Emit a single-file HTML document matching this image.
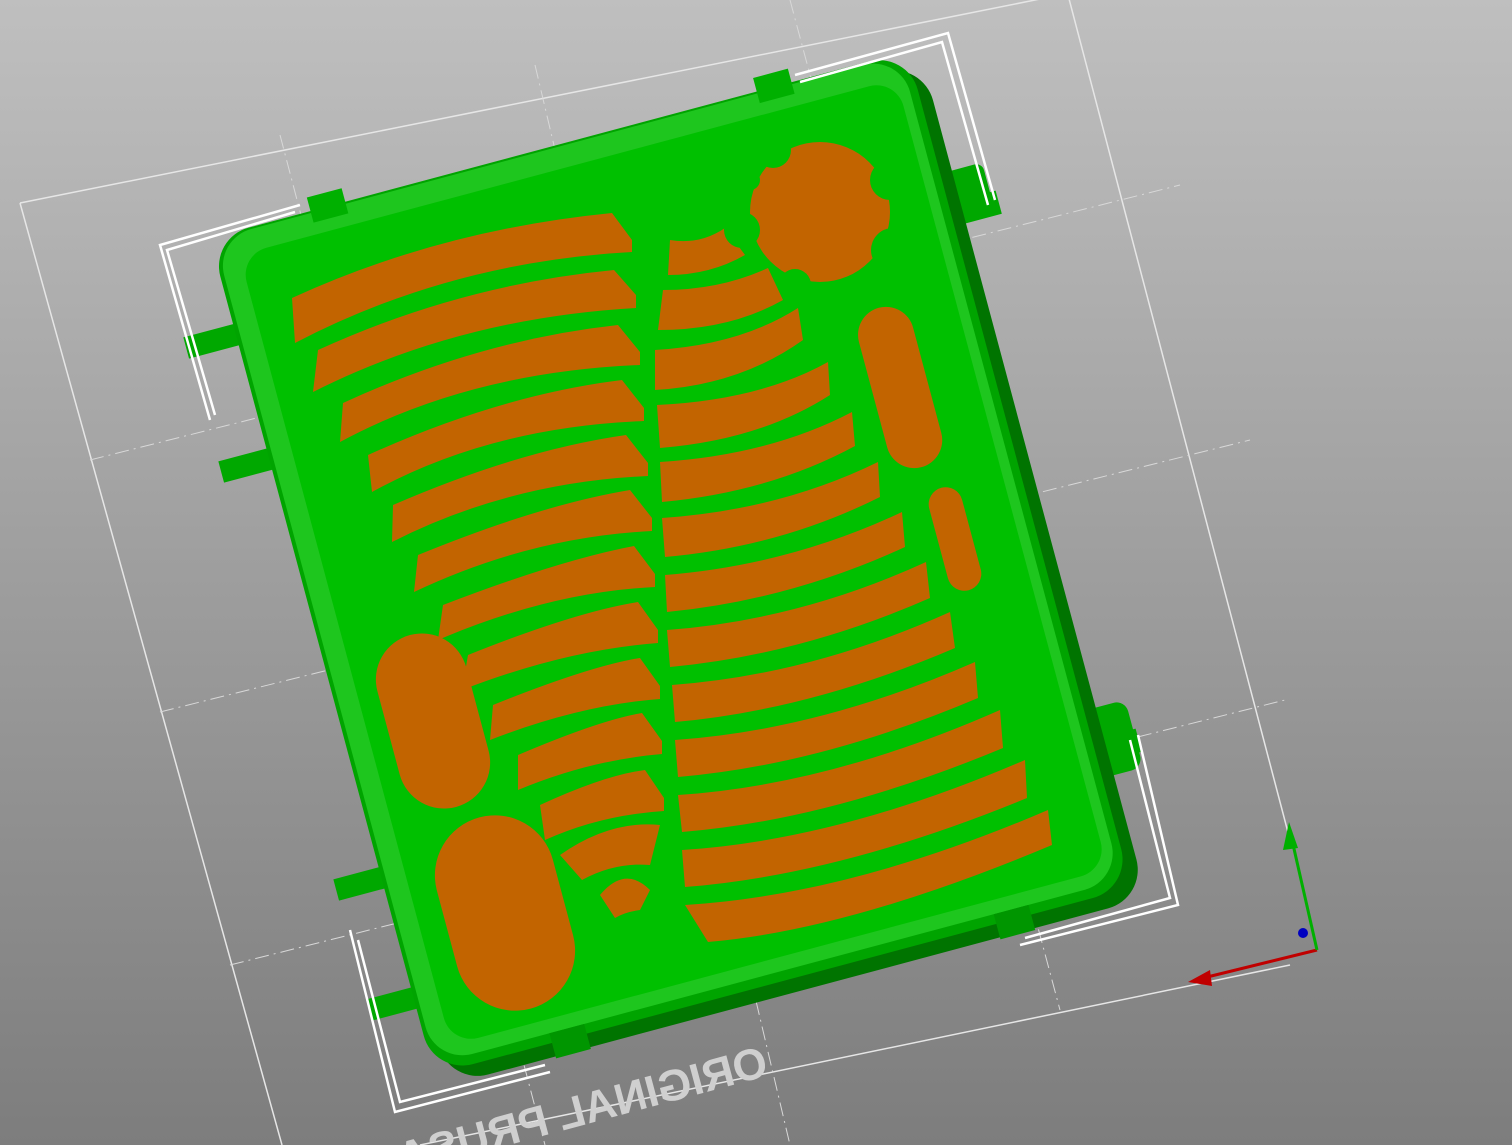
<!DOCTYPE html>
<html><head><meta charset="utf-8"><style>
html,body{margin:0;padding:0;width:1512px;height:1145px;overflow:hidden}
body{background:linear-gradient(#bdbdbd,#7e7e7e)}
</style></head><body>
<svg width="1512" height="1145" viewBox="0 0 1512 1145" xmlns="http://www.w3.org/2000/svg">
<defs><linearGradient id="bg" x1="0" y1="0" x2="0" y2="1"><stop offset="0" stop-color="#bfbfbf"/><stop offset="1" stop-color="#7d7d7d"/></linearGradient></defs>
<rect width="1512" height="1145" fill="url(#bg)"/>
<g stroke="#e6e6e6" stroke-width="1.5" fill="none">
<path d="M20,203 L1075,-8"/><path d="M20,203 L282,1145"/><path d="M1068,-5 L1290,840"/><path d="M1290,965 L420,1145"/>
</g>
<g stroke="#d8d8d8" stroke-width="1" fill="none" stroke-dasharray="14,5,2,5">
<path d="M90,460 L1180,185"/><path d="M160,712 L1250,440"/><path d="M230,965 L1285,700"/>
<path d="M280,135 L545,1145"/><path d="M535,65 L790,1145"/><path d="M790,0 L1060,1010"/>
</g>
<text x="0" y="0" transform="translate(770,1075) rotate(-15) scale(-1,1)" font-family="Liberation Sans, sans-serif" font-weight="bold" font-size="44" fill="#cfcfcf">ORIGINAL PRUSA</text>
<g fill="#00a800">
<rect x="185" y="328" width="70" height="22" transform="rotate(-15 220 339)"/>
<rect x="220" y="452" width="70" height="22" transform="rotate(-15 255 463)"/>
<rect x="335" y="870" width="70" height="22" transform="rotate(-15 370 881)"/>
<rect x="368" y="990" width="70" height="22" transform="rotate(-15 403 1001)"/>
<rect x="925" y="200" width="75" height="24" transform="rotate(-15 962 212)"/>
<rect x="1065" y="738" width="75" height="24" transform="rotate(-15 1102 750)"/>
<rect x="940" y="168" width="48" height="40" rx="8" transform="rotate(-15 964 188)"/>
<rect x="1085" y="705" width="50" height="70" rx="12" transform="rotate(-15 1110 740)"/>
</g>
<g transform="translate(210,238) rotate(-15)">
<rect x="12" y="14" width="722" height="866" rx="40" fill="#007400"/>
<rect x="0" y="0" width="722" height="866" rx="40" fill="#00a400"/>
<rect x="4" y="2" width="710" height="854" rx="38" fill="#1ec61e"/>
<rect x="24" y="24" width="680" height="818" rx="28" fill="#00c000"/>
<rect x="104" y="-14" width="36" height="26" fill="#00b000"/>
<rect x="566" y="-14" width="36" height="26" fill="#00b000"/>
<rect x="122" y="856" width="36" height="26" fill="#009600"/>
<rect x="582" y="856" width="36" height="26" fill="#009600"/>
</g>
<g fill="#c26400">
<path d="M292,298 Q440,230 612,213 L632,240 L632,252 Q450,262 295,343 Z"/>
<path d="M318,350 Q460,285 614,270 L636,295 L636,308 Q460,318 313,392 Z"/>
<path d="M343,403 Q480,340 618,325 L640,352 L640,365 Q470,372 340,442 Z"/>
<path d="M368,455 Q500,395 622,380 L644,408 L644,421 Q490,427 372,492 Z"/>
<path d="M393,505 Q520,450 626,435 L648,463 L648,476 Q510,482 392,542 Z"/>
<path d="M418,555 Q540,505 630,490 L652,518 L652,531 Q530,537 414,592 Z"/>
<path d="M443,605 Q560,560 634,546 L655,574 L655,587 Q550,592 438,640 Z"/>
<path d="M468,655 Q575,612 638,602 L658,630 L658,643 Q565,650 462,690 Z"/>
<path d="M493,705 Q590,666 640,658 L660,686 L660,699 Q580,705 490,740 Z"/>
<path d="M518,755 Q600,720 642,713 L662,741 L662,754 Q590,760 518,790 Z"/>
<path d="M540,805 Q605,775 645,770 L664,798 L664,811 Q600,815 545,840 Z"/>
<path d="M560,855 Q610,820 660,825 L650,865 Q615,862 582,880 Z"/>
<path d="M600,895 Q625,865 650,890 L640,910 Q625,912 615,918 Z"/>
<path d="M670,240 Q700,245 725,228 L745,255 Q710,275 668,275 Z"/>
<path d="M663,290 Q720,290 768,268 L783,300 Q730,330 658,330 Z"/>
<path d="M655,350 Q740,345 798,308 L803,340 Q740,385 655,390 Z"/>
<path d="M657,405 Q760,400 828,362 L830,395 Q760,440 660,448 Z"/>
<path d="M660,462 Q770,455 852,412 L855,446 Q770,492 662,502 Z"/>
<path d="M662,518 Q780,510 878,462 L880,497 Q780,547 665,557 Z"/>
<path d="M665,575 Q790,565 902,512 L905,547 Q790,600 667,612 Z"/>
<path d="M667,630 Q800,620 926,562 L930,598 Q800,655 670,667 Z"/>
<path d="M672,685 Q810,675 950,612 L955,648 Q810,710 675,722 Z"/>
<path d="M675,740 Q820,730 975,662 L978,698 Q820,765 678,777 Z"/>
<path d="M678,795 Q830,785 1000,710 L1003,748 Q830,820 682,832 Z"/>
<path d="M682,850 Q840,840 1025,760 L1027,798 Q840,875 685,887 Z"/>
<path d="M685,905 Q850,895 1048,810 L1052,845 Q850,930 708,942 Z"/>
<circle cx="820" cy="212" r="70"/>
<rect x="872" y="305" width="56" height="165" rx="28" transform="rotate(-15 900 387)"/>
<rect x="938" y="486" width="34" height="106" rx="17" transform="rotate(-15 955 539)"/>
<rect x="387" y="632" width="92" height="178" rx="46" transform="rotate(-15 433 721)"/>
<rect x="445" y="814" width="120" height="198" rx="60" transform="rotate(-15 505 913)"/>
</g>
<g fill="#00c000"><circle cx="773" cy="150" r="18"/><circle cx="890" cy="180" r="20"/><circle cx="893" cy="250" r="22"/><circle cx="742" cy="230" r="18"/><circle cx="795" cy="285" r="16"/><circle cx="850" cy="128" r="14"/><circle cx="750" cy="180" r="10"/><circle cx="860" cy="285" r="12"/></g>
<g stroke="#fff" stroke-width="2.5" fill="none">
<path d="M300,205 L160,245 L210,420"/><path d="M295,212 L167,250 L215,415"/>
<path d="M795,75 L948,33 L995,200"/><path d="M800,82 L942,42 L988,205"/>
<path d="M1138,735 L1178,905 L1020,945"/><path d="M1130,740 L1170,898 L1025,938"/>
<path d="M350,930 L395,1112 L550,1072"/><path d="M358,940 L400,1102 L545,1065"/>
</g>
<path d="M1317,950 L1195,980" stroke="#c00000" stroke-width="3"/>
<polygon points="1188,982 1210,970 1212,986" fill="#c00000"/>
<path d="M1317,950 L1292,840" stroke="#00b000" stroke-width="3"/>
<polygon points="1289,822 1298,848 1283,850" fill="#00b000"/>
<circle cx="1303" cy="933" r="5" fill="#0000c0"/>
</svg>
</body></html>
